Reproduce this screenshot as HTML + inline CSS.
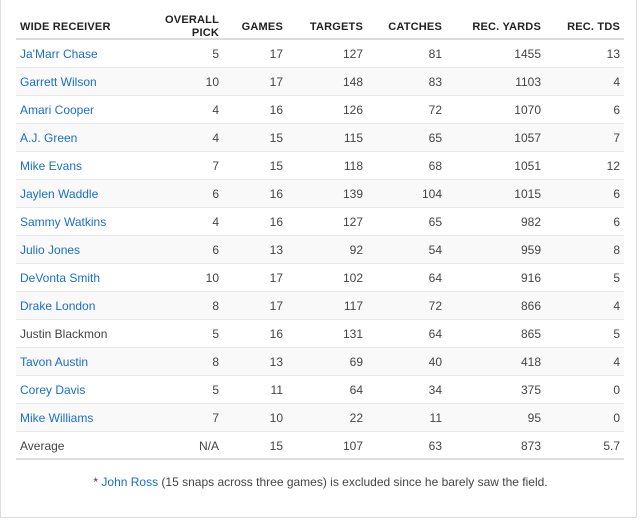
<!DOCTYPE html><html><head><style>
body{margin:0;width:641px;height:521px;background:#fff;font-family:"Liberation Sans",Arial,sans-serif;position:relative;overflow:hidden}
.frame{position:absolute;left:0;top:-2px;width:637px;height:520px;border:1px solid #ddd;box-sizing:border-box;border-top:none}
.r{position:absolute;left:16px;width:608px;height:28px;border-bottom:1px solid #e8e8e8;box-sizing:border-box;font-size:12px;color:#444}
.r.alt{background:#f9f9f9}
.r span{position:absolute;top:7px;text-align:right;white-space:nowrap}
.r span.n{left:4px;text-align:left}
.a{color:#1a6ec8}
.h{position:absolute;font-size:11px;font-weight:bold;color:#222;text-align:right;line-height:13px;letter-spacing:0.2px}
.c1{right:405px}.c2{right:341px}.c3{right:261px}.c4{right:182px}.c5{right:83px}.c6{right:4px}
.ft{position:absolute;top:475px;left:0;width:641px;text-align:center;font-size:12px;color:#444}
</style></head><body>
<div class="frame"></div>
<div style="position:absolute;left:16px;top:38px;width:608px;height:2px;background:#ddd"></div>
<div class="h" style="left:20px;top:21px">WIDE RECEIVER</div>
<div class="h" style="right:422px;top:14px">OVERALL<br>PICK</div>
<div class="h" style="right:358px;top:21px">GAMES</div>
<div class="h" style="right:278px;top:21px">TARGETS</div>
<div class="h" style="right:199px;top:21px">CATCHES</div>
<div class="h" style="right:100px;top:21px">REC. YARDS</div>
<div class="h" style="right:21px;top:21px">REC. TDS</div>
<div id="t"></div>
<div class="ft">* <span class="a">John Ross</span> (15 snaps across three games) is excluded since he barely saw the field.</div>
<script>
var d=[["Ja'Marr Chase",5,17,127,81,1455,13,1],["Garrett Wilson",10,17,148,83,1103,4,1],["Amari Cooper",4,16,126,72,1070,6,1],["A.J. Green",4,15,115,65,1057,7,1],["Mike Evans",7,15,118,68,1051,12,1],["Jaylen Waddle",6,16,139,104,1015,6,1],["Sammy Watkins",4,16,127,65,982,6,1],["Julio Jones",6,13,92,54,959,8,1],["DeVonta Smith",10,17,102,64,916,5,1],["Drake London",8,17,117,72,866,4,1],["Justin Blackmon",5,16,131,64,865,5,0],["Tavon Austin",8,13,69,40,418,4,1],["Corey Davis",5,11,64,34,375,0,1],["Mike Williams",7,10,22,11,95,0,1],["Average","N/A",15,107,63,873,5.7,0]];
var h="";d.forEach(function(r,i){h+='<div class="r'+(i%2?' alt':'')+'" style="top:'+(40+28*i)+'px'+(i==14?';border-bottom-color:#ddd;border-bottom-width:2px':'')+'"><span class="n'+(r[7]?' a':'')+'">'+r[0]+'</span>';for(var j=1;j<7;j++)h+='<span class="c'+j+'">'+r[j]+'</span>';h+='</div>';});
document.getElementById("t").innerHTML=h;
</script>
</body></html>
